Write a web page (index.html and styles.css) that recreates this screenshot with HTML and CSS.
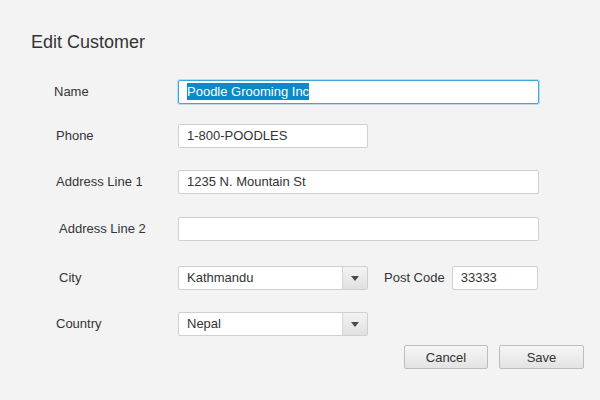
FILE: index.html
```html
<!DOCTYPE html>
<html>
<head>
<meta charset="utf-8">
<link rel="stylesheet" href="styles.css">
</head>
<body>
<div class="dialog">
  <h1 class="title">Edit Customer</h1>
  <div class="form">
    <div class="row row-name">
      <label class="label">Name</label>
      <div class="field field-wide field-focus"><span class="sel">Poodle Grooming Inc</span></div>
    </div>
    <div class="row row-phone">
      <label class="label off2">Phone</label>
      <div class="field field-short">1-800-POODLES</div>
    </div>
    <div class="row row-addr1">
      <label class="label off2">Address Line 1</label>
      <div class="field field-wide">1235 N. Mountain St</div>
    </div>
    <div class="row row-addr2">
      <label class="label off5">Address Line 2</label>
      <div class="field field-wide"></div>
    </div>
    <div class="row row-city">
      <label class="label off5">City</label>
      <div class="select field-short">
        <span class="select-text">Kathmandu</span>
        <span class="select-btn"><span class="arrow"></span></span>
      </div>
      <label class="label-inline">Post Code</label>
      <div class="field field-post">33333</div>
    </div>
    <div class="row row-country">
      <label class="label off2">Country</label>
      <div class="select field-short">
        <span class="select-text">Nepal</span>
        <span class="select-btn"><span class="arrow"></span></span>
      </div>
    </div>
    <div class="actions">
      <button class="btn btn-cancel">Cancel</button>
      <button class="btn btn-save">Save</button>
    </div>
  </div>
</div>
</body>
</html>
```

FILE: styles.css
```css
html, body {
  margin: 0;
  padding: 0;
  background: #f3f3f3;
  font-family: "Liberation Sans", Arial, sans-serif;
  color: #333;
}

.dialog {
  width: 600px;
  height: 400px;
  box-sizing: border-box;
  padding: 31px 16px 0 31px;
}

.title {
  margin: 0;
  font-size: 18px;
  font-weight: normal;
  line-height: 22px;
  color: #333;
}

.form {
  display: flex;
  flex-direction: column;
  padding-left: 23px;
}

.row {
  display: flex;
  align-items: center;
  height: 24px;
}

.row-name { margin-top: 27px; }
.row-phone { margin-top: 20px; }
.row-addr1 { margin-top: 22px; }
.row-addr2 { margin-top: 23px; }
.row-city { margin-top: 25px; }
.row-country { margin-top: 22px; }

.label {
  width: 124px;
  box-sizing: border-box;
  font-size: 13px;
  line-height: 16px;
  margin-top: -1px;
  color: #333;
}

.off2 { padding-left: 2px; }
.off5 { padding-left: 5px; }

.label-inline {
  font-size: 13px;
  line-height: 16px;
  margin: 0 7px 0 16px;
  color: #333;
}

.field {
  height: 24px;
  box-sizing: border-box;
  border: 1px solid #cfcfcf;
  border-radius: 2px;
  background: #fff;
  padding: 0 8px;
  font-size: 13px;
  line-height: 22px;
  color: #333;
  white-space: nowrap;
  overflow: hidden;
}

.field-wide { width: 361px; }
.field-short { width: 190px; }
.field-post { width: 86px; }

.field-focus {
  border-color: #3ea7dd;
  box-shadow: 0 0 0 1px rgba(90, 180, 230, 0.35);
}

.sel {
  background: #0a8ac7;
  color: #fff;
  display: inline-block;
  line-height: 17px;
  vertical-align: middle;
  margin-top: -2px;
}

.select {
  display: flex;
  height: 24px;
  box-sizing: border-box;
  border: 1px solid #cfcfcf;
  border-radius: 2px;
  background: #fff;
  font-size: 13px;
  line-height: 22px;
  color: #333;
  overflow: hidden;
}

.select-text {
  flex: 1;
  padding-left: 8px;
}

.select-btn {
  width: 24px;
  border-left: 1px solid #d4d4d4;
  background: linear-gradient(#f3f3f3, #e1e1e1);
  display: flex;
  align-items: center;
  justify-content: center;
}

.arrow {
  width: 0;
  height: 0;
  border-left: 4px solid transparent;
  border-right: 4px solid transparent;
  border-top: 5px solid #4a4a4a;
  margin-top: 1px;
}

.actions {
  display: flex;
  justify-content: flex-end;
  gap: 11px;
  margin-top: 9px;
}

.btn {
  height: 24px;
  box-sizing: border-box;
  border: 1px solid #bdbdbd;
  border-radius: 2px;
  background: linear-gradient(#f6f6f6, #e3e3e3);
  font-family: "Liberation Sans", Arial, sans-serif;
  font-size: 13px;
  color: #333;
  padding: 0;
}

.btn-cancel { width: 84px; }
.btn-save { width: 85px; }
```
